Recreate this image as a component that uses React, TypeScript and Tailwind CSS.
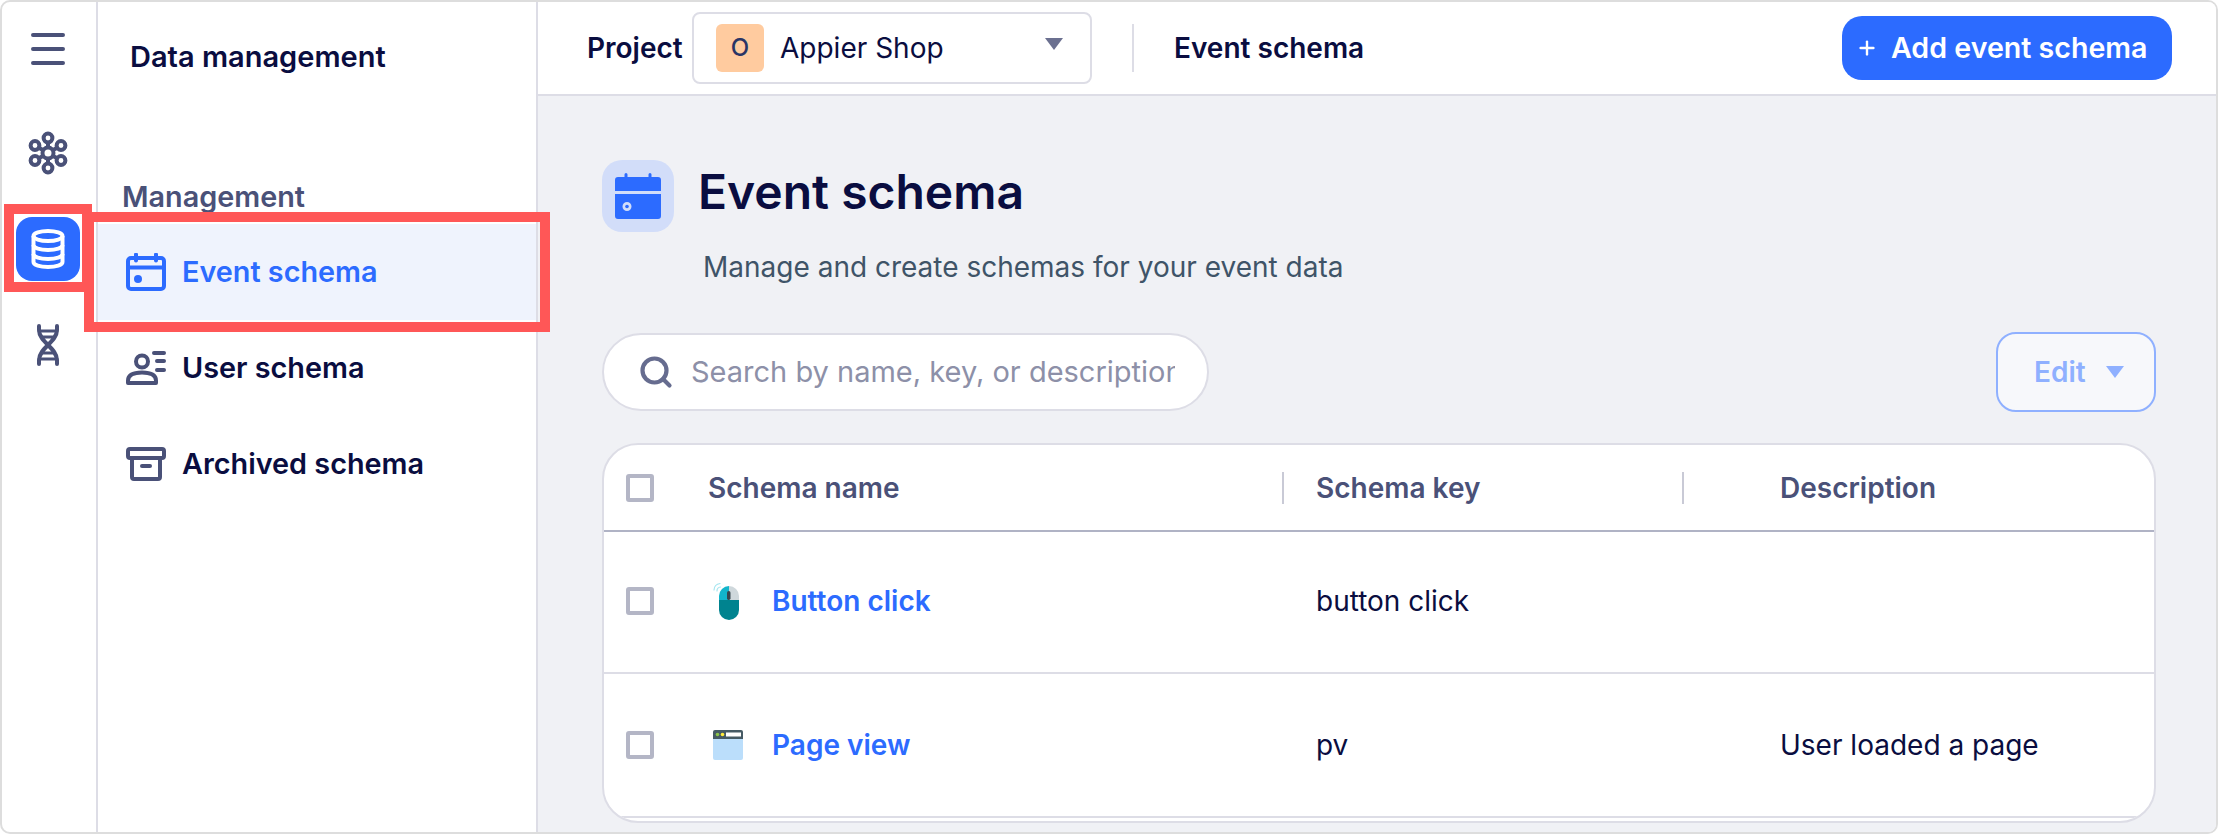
import { Plus, Search } from "lucide-react";

const FONT = "font-['Inter','Liberation_Sans',sans-serif]";

function Hamburger() {
  return (
    <svg width="34" height="34" viewBox="0 0 34 34" fill="none" stroke="#4A5178" strokeWidth="4" strokeLinecap="round">
      <path d="M2 3h30M2 17h30M2 31h30" />
    </svg>
  );
}

function Molecule() {
  const pts = [[21, 7], [21, 37], [8, 14.500], [34, 14.500], [8, 29.500], [34, 29.500]];
  return (
    <svg width="42" height="44" viewBox="0 0 42 44" fill="none" stroke="#4A5178" strokeWidth="4">
      {pts.map(([x, y]) => <path key={`${x}-${y}`} d={`M21 22 L${x} ${y}`} />)}
      <circle cx="21" cy="22" r="5.5" fill="#fff" />
      {pts.map(([x, y]) => <circle key={`c${x}-${y}`} cx={x} cy={y} r="4.400" fill="#fff" />)}
    </svg>
  );
}

function Database() {
  return (
    <svg width="34" height="40" viewBox="0 0 34 40" fill="none" stroke="#fff" strokeWidth="4">
      <ellipse cx="17" cy="7" rx="14.5" ry="5" />
      <path d="M2.500 7v26c0 3 6.500 5 14.500 5s14.500-2 14.500-5V7" />
      <path d="M2.500 16c0 3 6.500 5 14.500 5s14.500-2 14.500-5M2.500 25c0 3 6.500 5 14.500 5s14.500-2 14.500-5" />
    </svg>
  );
}

function Dna() {
  return (
    <svg width="24" height="42" viewBox="0 0 24 42" fill="none" stroke="#4A5178" strokeWidth="4" strokeLinecap="round">
      <path d="M3 2v4c0 12 18 18 18 30v4" />
      <path d="M21 2v4c0 12-18 18-18 30v4" />
      <path d="M3 7h18M6 13h12M6 29h12M3 35h18" strokeWidth="3" />
    </svg>
  );
}

function CalendarLine() {
  return (
    <svg width="40" height="38" viewBox="0 0 40 38" fill="none" stroke="#2C6BFF" strokeWidth="4">
      <rect x="2" y="5" width="36" height="31" rx="3" />
      <path d="M2 14.500h36" />
      <path d="M10 1.500v6M30 1.500v6" strokeLinecap="round" />
      <circle cx="12" cy="26" r="4" fill="#2C6BFF" stroke="none" />
    </svg>
  );
}

function UserList() {
  return (
    <svg width="40" height="34" viewBox="0 0 40 34" fill="none" stroke="#4A5178" strokeWidth="4" strokeLinecap="round">
      <circle cx="16" cy="10.500" r="6" />
      <path d="M2 32v-2.500c0-5 5-8 14-8s14 3 14 8V32z" strokeLinejoin="round" />
      <path d="M28 2h10M31 10h7M31 19h7" />
    </svg>
  );
}

function ArchiveBox() {
  return (
    <svg width="40" height="34" viewBox="0 0 40 34" fill="none" stroke="#4A5178" strokeWidth="4" strokeLinejoin="round">
      <rect x="2" y="2" width="36" height="9" rx="2" />
      <path d="M6 11v19a2 2 0 0 0 2 2h24a2 2 0 0 0 2-2V11" />
      <path d="M16 19h8" strokeLinecap="round" />
    </svg>
  );
}

function CalendarSolid() {
  return (
    <svg width="46" height="46" viewBox="0 0 46 46" fill="#2C6BFF">
      <path d="M11 0a1.500 1.500 0 0 1 1.500 1.500V4h21V1.500a1.500 1.500 0 0 1 3 0V4H43a3 3 0 0 1 3 3v11H0V7a3 3 0 0 1 3-3h6.500V1.500A1.500 1.500 0 0 1 11 0z" />
      <path fillRule="evenodd" d="M0 21h46v22a3 3 0 0 1-3 3H3a3 3 0 0 1-3-3zM12 29a4.500 4.500 0 1 0 0 9 4.500 4.500 0 0 0 0-9z" />
      <circle cx="12" cy="33.500" r="1.800" />
    </svg>
  );
}

function MouseIcon() {
  return (
    <svg width="28" height="38" viewBox="0 0 28 38" fill="none">
      <path d="M6 19V14a10 10 0 0 1 10-10v15z" fill="#12B5CB" />
      <path d="M16 4a10 10 0 0 1 10 10v5H16z" fill="#CFD8DC" />
      <path d="M6 18h20v10a10 10 0 0 1-20 0z" fill="#00838F" />
      <rect x="14" y="9" width="3.500" height="9" rx="1.700" fill="#37474F" />
      <path d="M1 8a7 7 0 0 1 6-6.500M4 9a4 4 0 0 1 3.500-4" stroke="#A5E6F0" strokeWidth="1.200" strokeLinecap="round" />
    </svg>
  );
}

function PageIcon() {
  return (
    <svg width="30" height="30" viewBox="0 0 30 30">
      <path d="M0 8h30v20a2 2 0 0 1-2 2H2a2 2 0 0 1-2-2z" fill="#BBDEFB" />
      <path d="M2 0h26a2 2 0 0 1 2 2v7H0V2a2 2 0 0 1 2-2z" fill="#455A64" />
      <circle cx="4.500" cy="4.500" r="1.800" fill="#8BC34A" />
      <circle cx="9.500" cy="4.500" r="1.800" fill="#FFEB3B" />
      <rect x="13" y="2.500" width="15" height="4" fill="#fff" />
    </svg>
  );
}

function Checkbox() {
  return <span className="block w-[28px] h-[28px] rounded-[3px] border-[4px] border-[#B4B6C6] bg-white" />;
}

function NavRow({ icon, label, active }: { icon: React.ReactNode; label: string; active?: boolean }) {
  return (
    <div className={`h-[96px] flex items-center pl-[28px] ${active ? "bg-[#EFF3FD]" : ""}`}>
      <span className="w-[40px] flex justify-center">{icon}</span>
      <span className={`ml-[16px] text-[28.8px] font-semibold ${active ? "text-[#2C6BFF]" : "text-[#0A0D40]"}`}>{label}</span>
    </div>
  );
}

const COLS = "grid grid-cols-[104px_608px_464px_1fr] items-center";

function Row({ icon, name, schemaKey, desc, className }: { icon: React.ReactNode; name: string; schemaKey: string; desc?: string; className: string }) {
  return (
    <div className={`${COLS} ${className} border-b-2 border-[#DDDDE6] shrink-0`}>
      <span className="pl-[22px]"><Checkbox /></span>
      <div className="flex items-center">
        <span className="w-[64px] flex pl-[5px]">{icon}</span>
        <span className="text-[28px] font-semibold text-[#2C6BFF]">{name}</span>
      </div>
      <span className="text-[28px] text-[#0A0D40]">{schemaKey}</span>
      <span className="text-[28px] text-[#0A0D40]">{desc}</span>
    </div>
  );
}

export default function App() {
  return (
    <div className={`${FONT} relative w-[2218px] h-[834px] overflow-hidden bg-white`}>
      <div className="flex h-full border-2 border-[#DDDDDD] rounded-[10px] overflow-hidden">
        {/* icon rail */}
        <div className="w-[96px] shrink-0 border-r-2 border-[#DDDDE6] pr-[2px] flex flex-col items-center pt-[30px]">
          <Hamburger />
          <div className="mt-[55px] flex flex-col gap-[32px] items-center">
            <span className="w-[64px] h-[64px] flex items-center justify-center"><Molecule /></span>
            <span className="w-[64px] h-[64px] rounded-[16px] bg-[#2C6BFF] flex items-center justify-center"><Database /></span>
            <span className="w-[64px] h-[64px] flex items-center justify-center"><Dna /></span>
          </div>
        </div>

        {/* sidebar */}
        <div className="w-[440px] shrink-0 border-r-2 border-[#DDDDE6] flex flex-col">
          <div className="pl-[32px] pt-[38px] h-[178px] text-[29px] leading-[34px] font-semibold text-[#0A0D40]">Data management</div>
          <div className="pl-[24px] h-[44px] text-[28.8px] leading-[34px] font-semibold text-[#4A5178]">Management</div>
          <NavRow active icon={<CalendarLine />} label="Event schema" />
          <NavRow icon={<UserList />} label="User schema" />
          <NavRow icon={<ArchiveBox />} label="Archived schema" />
        </div>

        {/* main */}
        <div className="flex-1 min-w-0 flex flex-col bg-[#F0F1F5]">
          <div className="h-[94px] shrink-0 bg-white border-b-2 border-[#DDDDE6] flex items-center pl-[49px] pr-[44px]">
            <span className="text-[28px] font-semibold text-[#0A0D40] w-[105px]">Project</span>
            <div className="w-[400px] h-[72px] rounded-[8px] border-2 border-[#DDDDE6] flex items-center pl-[22px] pr-[27px]">
              <span className="w-[48px] h-[48px] rounded-[6px] bg-[#FFCB9F] flex items-center justify-center text-[24px] font-medium text-[#2A3566]">O</span>
              <span className="ml-[16px] text-[28px] text-[#0A0D40]">Appier Shop</span>
              <span className="ml-auto w-0 h-0 border-x-[9px] border-x-transparent border-t-[12px] border-t-[#6B7090] -translate-y-[4px]" />
            </div>
            <span className="ml-[40px] w-[2px] h-[48px] bg-[#DDDDE6]" />
            <span className="ml-[40px] text-[28px] font-semibold text-[#0A0D40]">Event schema</span>
            <button className="ml-auto w-[330px] h-[64px] rounded-[20px] bg-[#2C6BFF] text-white flex items-center pl-[14px]">
              <Plus size={22} strokeWidth={2.6} />
              <span className="ml-[13px] text-[28.6px] font-semibold">Add event schema</span>
            </button>
          </div>

          <div className="flex-1 min-h-0 pt-[64px] pl-[64px] pr-[60px] flex flex-col">
            <div className="flex items-start h-[72px]">
              <span className="w-[72px] h-[72px] rounded-[20px] bg-[#D2DDF9] flex items-center justify-center"><CalendarSolid /></span>
              <h1 className="ml-[24px] text-[48px] leading-[64px] font-semibold text-[#0A0D40]">Event schema</h1>
            </div>
            <p className="mt-[18px] ml-[101px] text-[28px] leading-[34px] text-[#3F5468]">Manage and create schemas for your event data</p>

            <div className="mt-[48px] flex justify-between items-center h-[80px]">
              <div className="w-[607px] h-[78px] rounded-full bg-white border-2 border-[#DDDDE6] flex items-center pl-[34px]">
                <Search size={36} strokeWidth={2.8} color="#666C8F" className="shrink-0" />
                <span className="ml-[17px] w-[484px] overflow-hidden whitespace-nowrap text-[29px] text-[#8D90A8]">Search by name, key, or description</span>
              </div>
              <button className="w-[160px] h-[80px] rounded-[20px] border-2 border-[#8FB0FF] bg-[#F7F8FB] flex items-center pl-[36px]">
                <span className="text-[28px] font-semibold text-[#8FB0FF]">Edit</span>
                <span className="ml-[20px] w-0 h-0 border-x-[9px] border-x-transparent border-t-[12px] border-t-[#8FB0FF]" />
              </button>
            </div>

            <div className="mt-[31px] h-[380px] shrink-0 rounded-[36px] border-2 border-[#DDDDE6] bg-white overflow-hidden flex flex-col">
              <div className={`${COLS} h-[87px] shrink-0 border-b-2 border-[#B0B3C5]`}>
                <span className="pl-[22px]"><Checkbox /></span>
                <div className="flex items-center justify-between pr-[32px]">
                  <span className="text-[28px] font-semibold text-[#4A5178]">Schema name</span>
                  <span className="w-[2px] h-[32px] bg-[#C9CAD6]" />
                </div>
                <div className="flex items-center justify-between pr-[96px]">
                  <span className="text-[28px] font-semibold text-[#4A5178]">Schema key</span>
                  <span className="w-[2px] h-[32px] bg-[#C9CAD6]" />
                </div>
                <span className="text-[28px] font-semibold text-[#4A5178]">Description</span>
              </div>
              <Row className="h-[142px] pb-[2px]" icon={<MouseIcon />} name="Button click" schemaKey="button click" />
              <Row className="h-[144px]" icon={<PageIcon />} name="Page view" schemaKey="pv" desc="User loaded a page" />
            </div>
          </div>
        </div>
      </div>

      {/* red annotation boxes drawn over the page */}
      <div className="absolute left-[4px] top-[204px] w-[88px] h-[88px] border-[10px] border-[#FF5757] pointer-events-none" />
      <div className="absolute left-[84px] top-[212px] w-[466px] h-[120px] border-[10px] border-[#FF5757] pointer-events-none" />
    </div>
  );
}
